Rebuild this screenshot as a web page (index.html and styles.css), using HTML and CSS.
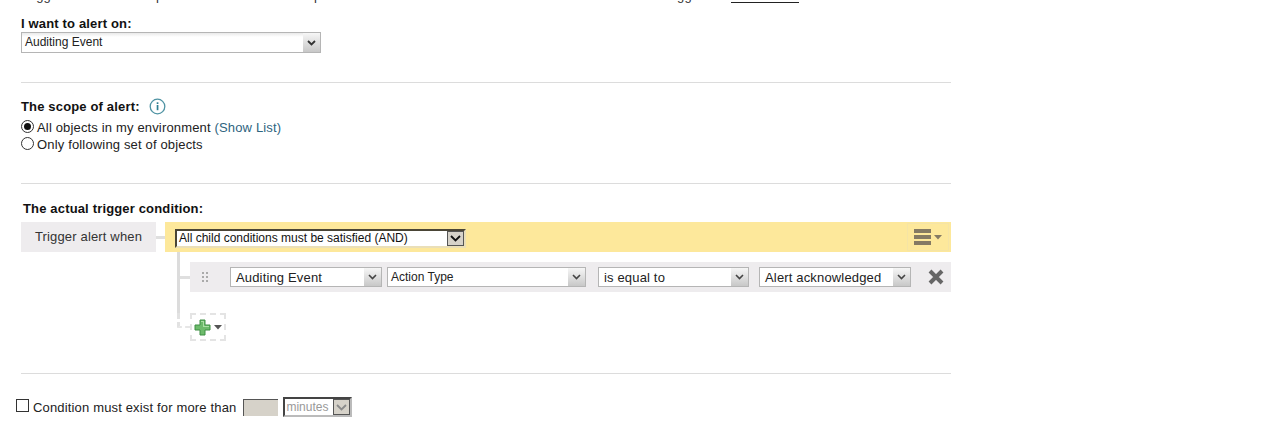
FILE: index.html
```html
<!DOCTYPE html>
<html lang="en">
<head>
<meta charset="utf-8">
<title>Alert trigger</title>
<link rel="stylesheet" href="styles.css">
</head>
<body>
<div class="page">
  <div class="clipped">
    <div class="clipped-line">
      <span class="cl cl-a">Trigger</span><span class="cl cl-b">p</span><span class="cl cl-c">p</span><span class="cl cl-d">gg</span><span class="cl-link">&nbsp;</span>
    </div>
  </div>

  <section class="sec sec-on">
    <div class="label">I want to alert on:</div>
    <div class="sel sel-main">
      <span class="sel-text">Auditing Event</span>
      <span class="sel-btn"><svg width="9" height="6" viewBox="0 0 9 6"><path d="M1 1l3.5 3.5L8 1" fill="none" stroke="#333" stroke-width="1.8"/></svg></span>
    </div>
  </section>

  <hr class="rule rule-1">

  <section class="sec sec-scope">
    <div class="label label-row">The scope of alert:
      <svg class="info" width="17" height="17" viewBox="0 0 17 17"><circle cx="8.5" cy="8.5" r="7.3" fill="#fff" stroke="#4f93a3" stroke-width="1.3"/><rect x="7.7" y="7" width="1.7" height="5.2" fill="#2f7f92"/><rect x="7.7" y="4.3" width="1.7" height="1.7" fill="#2f7f92"/></svg>
    </div>
    <div class="opts">
      <label class="opt"><span class="radio on"></span>All objects in my environment <a class="link">(Show List)</a></label>
      <label class="opt"><span class="radio"></span>Only following set of objects</label>
    </div>
  </section>

  <hr class="rule rule-2">

  <section class="sec sec-trigger">
    <div class="label label-trig">The actual trigger condition:</div>
    <div class="root-row">
      <div class="when">Trigger alert when</div>
      <div class="dash"></div>
      <div class="group">
        <div class="sel-native sel-and">
          <span class="sel-text">All child conditions must be satisfied (AND)</span>
          <span class="nat-btn"><svg width="11" height="7" viewBox="0 0 11 7"><path d="M1 1l4.5 4.5L10 1" fill="none" stroke="#111" stroke-width="1.8"/></svg></span>
        </div>
        <div class="menu-btn">
          <span class="bars"><i></i><i></i><i></i></span>
          <svg width="8" height="5" viewBox="0 0 8 5"><path d="M0 0h8L4 4.5z" fill="#857a63"/></svg>
        </div>
      </div>
    </div>

    <div class="tree">
      <div class="cond-row">
        <div class="tick"></div>
        <div class="cond">
          <span class="grip"></span>
          <div class="sel sel-c1"><span class="sel-text big">Auditing Event</span><span class="sel-btn"><svg width="9" height="6" viewBox="0 0 9 6"><path d="M1 1l3.5 3.5L8 1" fill="none" stroke="#444" stroke-width="1.6"/></svg></span></div>
          <div class="sel sel-c2"><span class="sel-text">Action Type</span><span class="sel-btn"><svg width="9" height="6" viewBox="0 0 9 6"><path d="M1 1l3.5 3.5L8 1" fill="none" stroke="#444" stroke-width="1.6"/></svg></span></div>
          <div class="sel sel-c3"><span class="sel-text big">is equal to</span><span class="sel-btn"><svg width="9" height="6" viewBox="0 0 9 6"><path d="M1 1l3.5 3.5L8 1" fill="none" stroke="#444" stroke-width="1.6"/></svg></span></div>
          <div class="sel sel-c4"><span class="sel-text big">Alert acknowledged</span><span class="sel-btn"><svg width="9" height="6" viewBox="0 0 9 6"><path d="M1 1l3.5 3.5L8 1" fill="none" stroke="#444" stroke-width="1.6"/></svg></span></div>
          <svg class="remove" width="16" height="16" viewBox="0 0 16 16"><path d="M2 2l12 12M14 2L2 14" stroke="#666" stroke-width="4"/></svg>
        </div>
      </div>
      <div class="add-row">
        <div class="tick-dash"></div>
        <div class="add-btn">
          <svg width="17" height="17" viewBox="0 0 17 17"><path d="M6 1h5v5h5v5h-5v5H6v-5H1V6h5z" fill="#6dbb6b" stroke="#3f8f45" stroke-width="1"/><path d="M7 2h3v5h5v1H9V3H7z" fill="#a9dfa3"/></svg>
          <svg width="8" height="5" viewBox="0 0 8 5"><path d="M0 0h8L4 4.5z" fill="#555"/></svg>
        </div>
      </div>
    </div>
  </section>

  <hr class="rule rule-3">

  <section class="sec-dur">
    <span class="check"></span>
    <span class="dur-label">Condition must exist for more than</span>
    <span class="dur-input"></span>
    <div class="sel-native sel-min">
      <span class="sel-text">minutes</span>
      <span class="nat-btn"><svg width="11" height="7" viewBox="0 0 11 7"><path d="M1 1l4.5 4.5L10 1" fill="none" stroke="#8a8a8a" stroke-width="1.8"/></svg></span>
    </div>
  </section>
</div>
</body>
</html>
```

FILE: styles.css
```css
* { box-sizing: border-box; }
html, body { margin: 0; padding: 0; background: #fff; }
body {
  font-family: "Liberation Sans", Arial, sans-serif;
  font-size: 13px;
  letter-spacing: .16px;
  color: #222;
  height: 428px;
  overflow: hidden;
}
.page { width: 951px; padding-left: 21px; }

.clipped { height: 3px; overflow: hidden; margin-left: -21px; }
.clipped-line { display: flex; height: 14px; margin-top: -11px; line-height: 14px; color: #333; }
.cl { display: block; white-space: nowrap; }
.cl-a { margin-left: 21px; width: 135px; }
.cl-b { width: 158px; }
.cl-c { width: 363px; }
.cl-d { width: 54px; }
.cl-link { width: 68px; border-bottom: 2px solid #222; height: 14px; margin-top: 1px; }

.label { font-weight: bold; color: #111; line-height: 15px; }

.sec-on { padding-top: 13px; }

.sel {
  display: flex;
  align-items: stretch;
  background: #fff;
  border: 1px solid #b5b5b5;
  height: 21px;
}
.sel-text { flex: 1; padding-left: 3px; line-height: 18px; white-space: nowrap; overflow: hidden; font-size: 12px; letter-spacing: 0; color: #222; }
.sel-text.big { font-size: 13px; letter-spacing: .16px; padding-left: 5px; line-height: 20px; }
.sel-btn {
  width: 17px;
  background: linear-gradient(#f6f6f6, #c8c8c8);
  display: flex;
  align-items: center;
  justify-content: center;
}
.sel-main { width: 300px; margin-top: 1px; background: linear-gradient(#e9e9e9, #fff 4px); }

.rule { border: 0; height: 1px; background: #dcdcdc; margin: 0; }
.rule-1 { margin-top: 29px; }
.rule-2 { margin-top: 30px; }
.rule-3 { margin-top: 32px; }

.sec-scope { padding-top: 15px; }
.label-row { display: flex; align-items: center; gap: 9px; height: 17px; }
.opts { margin-top: 4px; }
.opt { display: flex; align-items: center; height: 17px; color: #222; white-space: pre; }
.link { color: #2e6480; }
.radio {
  width: 13px; height: 13px;
  border: 1px solid #333;
  border-radius: 50%;
  margin: -2px 3px 0 0;
  background: #fff;
  position: relative;
  display: block;
}
.radio.on::after {
  content: "";
  position: absolute;
  left: 2px; top: 2px;
  width: 7px; height: 7px;
  border-radius: 50%;
  background: #111;
}

.sec-trigger { padding-top: 17px; }
.label-trig { margin-left: 2px; }
.root-row { display: flex; align-items: stretch; height: 30px; margin-top: 6px; }
.when {
  width: 135px;
  background: #eeecee;
  text-align: center;
  line-height: 29px;
  color: #333;
}
.dash { width: 9px; height: 3px; background: #dfdfdf; margin-top: 14px; }
.group {
  flex: 1;
  background: #fde89b;
  display: flex;
  align-items: center;
  justify-content: space-between;
  padding-left: 10px;
}
.sel-native {
  display: flex;
  align-items: stretch;
  background: #fff;
  border: 2px solid;
  border-color: #4a4536 #eadfb8 #eadfb8 #4a4536;
}
.sel-and { width: 291px; height: 19px; margin-top: 3px; }
.sel-and .sel-text { padding-left: 2px; line-height: 15px; color: #111; }
.nat-btn {
  width: 17px;
  background: #d6d2c9;
  border: 1px solid #555;
  display: flex;
  align-items: center;
  justify-content: center;
}
.menu-btn {
  width: 42px;
  height: 28px;
  margin-right: 2px;
  border: 1px solid #f5e4a5;
  display: flex;
  align-items: center;
  justify-content: center;
  gap: 3px;
}
.bars { display: flex; flex-direction: column; gap: 2px; }
.bars i { display: block; width: 17px; height: 4px; background: #857a63; }

.tree { margin-left: 156px; }
.cond-row { display: flex; align-items: flex-start; padding-top: 10px; height: 61px; border-left: 3px solid #dcdcdc; }
.tick { width: 10px; height: 3px; background: #dfdfdf; margin-top: 14px; }
.cond {
  flex: 1;
  height: 30px;
  background: #eeecee;
  display: flex;
  align-items: center;
}
.grip {
  width: 7px; height: 12px;
  margin-left: 11px;
  margin-right: 22px;
  background-image: radial-gradient(circle, #aaa 1.2px, transparent 1.3px);
  background-size: 4px 4px;
}
.cond .sel { height: 20px; }
.sel-c1 { width: 152px; margin-right: 5px; }
.sel-c2 { width: 199px; margin-right: 12px; }
.sel-c3 { width: 151px; margin-right: 10px; }
.sel-c4 { width: 152px; }
.remove { margin-left: 17px; }

.add-row { display: flex; align-items: flex-start; }
.tick-dash {
  width: 13px; height: 15px;
  border-left: 3px dashed #e2e2e2;
  border-bottom: 2px dashed #e6e6e6;
}
.add-btn {
  width: 36px; height: 28px;
  border: 2px dashed #e4e4e4;
  display: flex;
  align-items: center;
  justify-content: center;
  gap: 3px;
}

.sec-dur { display: flex; align-items: center; height: 20px; margin: 23px 0 0 -5px; }
.check { width: 13px; height: 13px; border: 1px solid #333; background: #fff; margin: -3px 4px 0 0; }
.dur-label { color: #222; margin-right: 7px; white-space: nowrap; }
.dur-input {
  width: 35px; height: 17px;
  background: #d6d2c9;
  border-top: 1px solid #555;
  border-left: 1px solid #555;
  margin-right: 5px;
}
.sel-min { width: 69px; height: 20px; border-color: #444 #bbb #bbb #444; }
.sel-min .sel-text { color: #999; padding-left: 1px; line-height: 16px; }
```
